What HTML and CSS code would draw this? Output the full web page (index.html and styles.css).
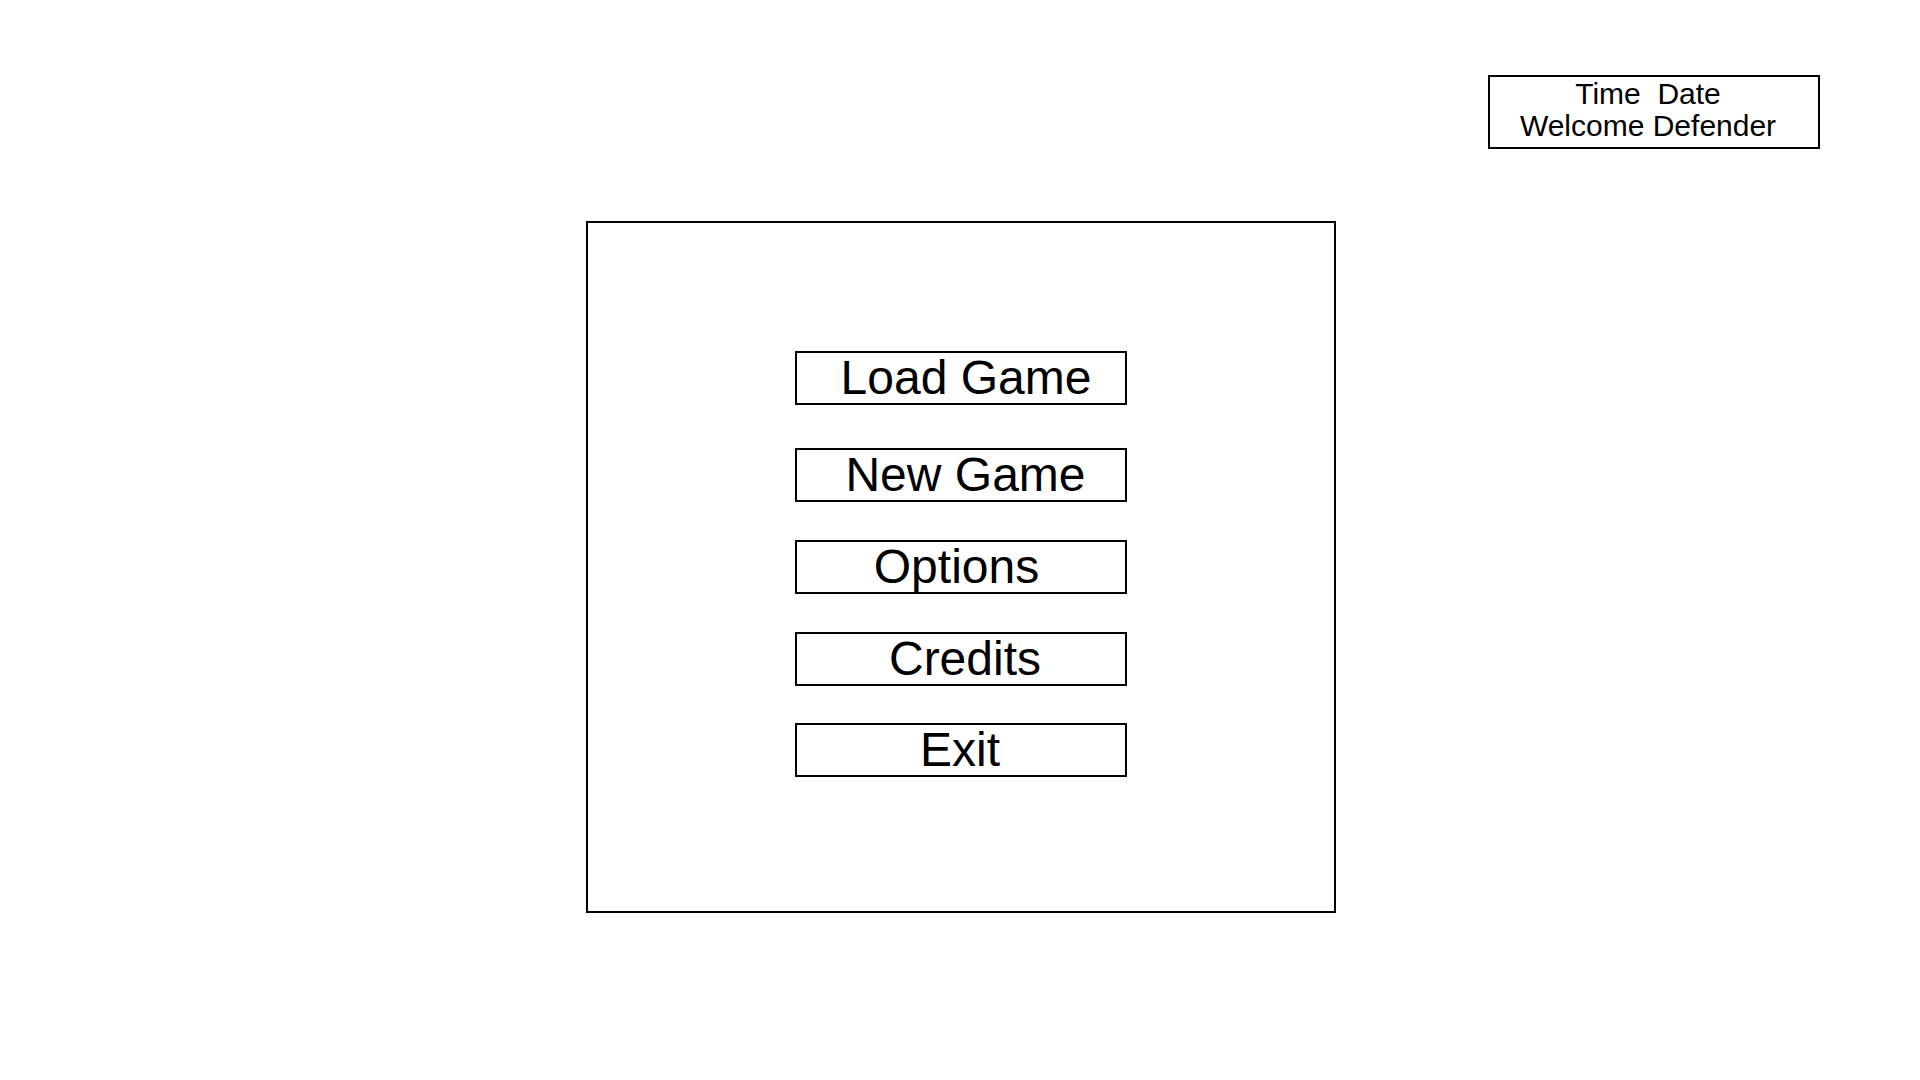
FILE: index.html
```html
<!DOCTYPE html>
<html>
<head>
<meta charset="utf-8">
<link rel="stylesheet" href="styles.css">
</head>
<body>
<div class="page">
  <header class="topbar">
    <div class="info">
      <div class="info-line">Time  Date</div>
      <div class="info-line">Welcome Defender</div>
    </div>
  </header>
  <main class="menu">
    <div class="btn btn-load">Load Game</div>
    <div class="btn btn-new">New Game</div>
    <div class="btn btn-options">Options</div>
    <div class="btn btn-credits">Credits</div>
    <div class="btn btn-exit">Exit</div>
  </main>
</div>
</body>
</html>
```
FILE: styles.css
```css
html, body {
  margin: 0;
  padding: 0;
  background: #ffffff;
}
body {
  font-family: "Liberation Sans", Arial, sans-serif;
  color: #000000;
  width: 1920px;
  height: 1080px;
  overflow: hidden;
}
.page {
  padding-top: 75px;
}
.topbar {
  display: flex;
  justify-content: flex-end;
  padding-right: 100px;
}
.info {
  box-sizing: border-box;
  width: 332px;
  height: 74px;
  border: 2px solid #000;
  padding-top: 1px;
  padding-right: 12px;
  font-size: 30px;
  line-height: 32px;
  text-align: center;
}
.info-line {
  white-space: pre;
}
.menu {
  box-sizing: border-box;
  width: 750px;
  height: 692px;
  margin-top: 72px;
  margin-left: 586px;
  border: 2px solid #000;
  padding-top: 128px;
  display: flex;
  flex-direction: column;
  align-items: center;
}
.btn {
  box-sizing: border-box;
  width: 332px;
  height: 54px;
  border: 2px solid #000;
  font-size: 48px;
  line-height: 50px;
  text-align: center;
  flex-shrink: 0;
}
.btn-load { padding-left: 10px; margin-bottom: 43px; }
.btn-new { padding-left: 9px; margin-bottom: 38px; }
.btn-options { padding-right: 9px; margin-bottom: 38px; }
.btn-credits { padding-left: 8px; margin-bottom: 37px; }
.btn-exit { padding-right: 2px; }
```
